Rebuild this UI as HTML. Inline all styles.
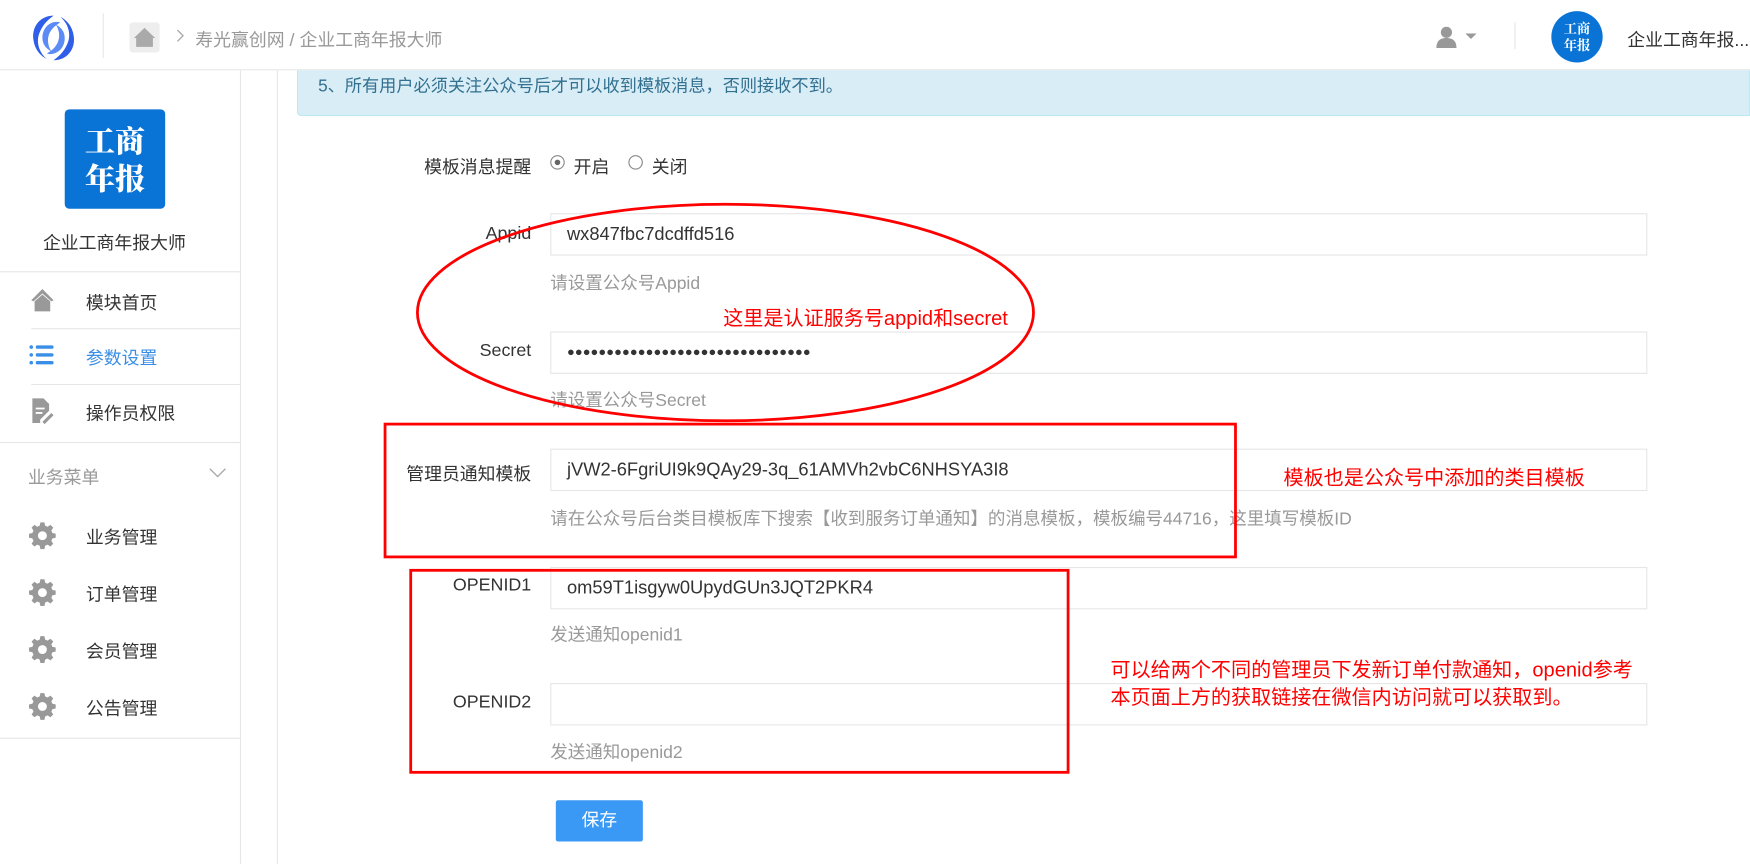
<!DOCTYPE html>
<html><head><meta charset="utf-8"><style>
*{margin:0;padding:0;box-sizing:border-box}
html,body{width:1750px;height:864px;overflow:hidden;background:#fff}
#w{position:absolute;left:0;top:0;width:1568px;height:774px;transform:scale(1.11607);transform-origin:0 0;font-family:"Liberation Sans","Noto Sans CJK SC",sans-serif;font-size:16px;color:#333}
.a{position:absolute;white-space:nowrap}
.hl{position:absolute;background:#e6e6e6;height:1px}
.lab{position:absolute;right:1092px;text-align:right;white-space:nowrap;font-size:16px;color:#333}
.inp{position:absolute;left:493px;width:983px;height:38px;border:1px solid #e6e6e6;padding-left:14px;line-height:36px;font-size:16.4px;color:#333}
.help{position:absolute;left:493px;color:#999;font-size:15.7px;white-space:nowrap}
.red{color:#f00;position:absolute;white-space:nowrap;font-size:18px}
.mi{position:absolute;left:77px;font-size:16px;color:#333}
</style></head><body><div id="w">
<div class="a" style="left:0;top:0;width:1568px;height:63px;border-bottom:1px solid #e8e8e8;background:#fff"></div>
<svg class="a" style="left:24px;top:10px" width="48" height="48" viewBox="0 0 48 48">
<path d="M24 4 C12 4 4 14 6 26 C7 34 12 40 18 43 C10 36 8 26 12 18 C15 11 20 7 24 4Z" fill="#2f5ee8"/>
<path d="M24 44 C36 44 44 34 42 22 C41 14 36 8 30 5 C38 12 40 22 36 30 C33 37 28 41 24 44Z" fill="#2f5ee8"/>
<path d="M30 10 C22 8 14 14 14 24 C14 30 18 34 22 36 C18 30 18 22 22 17 C24 14 27 12 30 10Z" fill="#5b8cf5"/>
<path d="M18 38 C26 40 34 34 34 24 C34 18 30 14 26 12 C30 18 30 26 26 31 C24 34 21 36 18 38Z" fill="#5b8cf5"/>
</svg>
<div class="a" style="left:92px;top:12px;width:1px;height:40px;background:#e6e6e6"></div>
<div class="a" style="left:116px;top:20px;width:27px;height:27px;background:#eee;border-radius:3px"></div>
<svg class="a" style="left:119px;top:23px" width="21" height="21" viewBox="0 0 21 21"><path d="M10.5 2 L1 11 L3 11 L3 19 L18 19 L18 11 L20 11Z" fill="#aaa"/></svg>
<svg class="a" style="left:158px;top:26px" width="8" height="12" viewBox="0 0 8 12"><path d="M1 1 L6 6 L1 11" stroke="#aaa" stroke-width="1.2" fill="none"/></svg>
<div class="a" style="left:175px;top:22px;color:#999;font-size:16px">寿光赢创网 / 企业工商年报大师</div>
<svg class="a" style="left:1285px;top:22px" width="22" height="22" viewBox="0 0 22 22"><circle cx="11" cy="7" r="5" fill="#999"/><path d="M2 21 C2 14 6 12 11 12 C16 12 20 14 20 21Z" fill="#999"/></svg>
<div class="a" style="left:1313px;top:30px;width:0;height:0;border-left:5px solid transparent;border-right:5px solid transparent;border-top:5px solid #999"></div>
<div class="a" style="left:1357px;top:20px;width:1px;height:24px;background:#e6e6e6"></div>
<div class="a" style="left:1390px;top:10px;width:46px;height:46px;border-radius:50%;background:#0A74D6;color:#fff;font-family:'Noto Serif CJK SC',serif;font-weight:bold;font-size:12px;line-height:15px;text-align:center;padding-top:8px">工商<br>年报</div>
<div class="a" style="left:1458px;top:22px;font-size:16px;color:#333">企业工商年报...</div>
<div class="a" style="left:215px;top:63px;width:1px;height:711px;background:#e6e6e6"></div>
<div class="a" style="left:248px;top:63px;width:1px;height:711px;background:#e6e6e6"></div>
<div class="a" style="left:58px;top:98px;width:90px;height:89px;background:#0A74D6;border-radius:4px;color:#fff;font-family:'Noto Serif CJK SC',serif;font-weight:900;font-size:27px;line-height:34px;text-align:center;padding-top:10px">工商<br>年报</div>
<div class="a" style="left:0;width:205px;top:204px;text-align:center;font-size:16px">企业工商年报大师</div>
<div class="hl" style="left:0;width:215px;top:243px"></div>
<svg class="a" style="left:26px;top:256px" width="24" height="24" viewBox="0 0 24 24"><path d="M12 3 L2 13 L4 14 L12 7 L20 14 L22 13Z" fill="#999"/><path d="M5 14 L12 8 L19 14 L19 23 L5 23Z" fill="#999"/></svg>
<div class="mi" style="top:258px">模块首页</div>
<div class="hl" style="left:28px;width:187px;top:294px"></div>
<svg class="a" style="left:26px;top:308px" width="24" height="20" viewBox="0 0 24 20"><g fill="#3a8ee6"><circle cx="2" cy="3" r="1.6"/><circle cx="2" cy="10" r="1.6"/><circle cx="2" cy="17" r="1.6"/><rect x="6" y="1.5" width="16" height="3" rx="1.5"/><rect x="6" y="8.5" width="16" height="3" rx="1.5"/><rect x="6" y="15.5" width="16" height="3" rx="1.5"/></g></svg>
<div class="mi" style="top:307px;color:#3a8ee6">参数设置</div>
<div class="hl" style="left:28px;width:187px;top:344px"></div>
<svg class="a" style="left:27px;top:356px" width="22" height="24" viewBox="0 0 22 24"><path d="M2 1 L12 1 L17 6 L17 12 L9 20 L9 23 L2 23Z" fill="#999"/><path d="M5 10 L13 10 M5 14 L11 14" stroke="#fff" stroke-width="1.6"/><path d="M11 22 L19 14 L21 16 L13 24Z" fill="#999"/></svg>
<div class="mi" style="top:357px">操作员权限</div>
<div class="hl" style="left:0;width:215px;top:396px"></div>
<div class="a" style="left:25px;top:414px;color:#999">业务菜单</div>
<svg class="a" style="left:187px;top:419px" width="16" height="10" viewBox="0 0 16 10"><path d="M1 1 L8 8 L15 1" stroke="#aaa" stroke-width="1.2" fill="none"/></svg>
<svg width="0" height="0" style="position:absolute"><defs><g id="gear"><path fill="#999" d="M10.2 1h3.6l.6 3 2.2 1 2.6-1.7 2.5 2.5-1.7 2.6 1 2.2 3 .6v3.6l-3 .6-1 2.2 1.7 2.6-2.5 2.5-2.6-1.7-2.2 1-.6 3h-3.6l-.6-3-2.2-1-2.6 1.7-2.5-2.5 1.7-2.6-1-2.2-3-.6v-3.6l3-.6 1-2.2-1.7-2.6 2.5-2.5 2.6 1.7 2.2-1z"/><circle cx="12" cy="13" r="4" fill="#fff"/></g></defs></svg>
<svg class="a" style="left:26px;top:467px" width="24" height="26" viewBox="0 0 24 26"><use href="#gear"/></svg>
<div class="mi" style="top:468px">业务管理</div>
<svg class="a" style="left:26px;top:518px" width="24" height="26" viewBox="0 0 24 26"><use href="#gear"/></svg>
<div class="mi" style="top:519px">订单管理</div>
<svg class="a" style="left:26px;top:569px" width="24" height="26" viewBox="0 0 24 26"><use href="#gear"/></svg>
<div class="mi" style="top:570px">会员管理</div>
<svg class="a" style="left:26px;top:620px" width="24" height="26" viewBox="0 0 24 26"><use href="#gear"/></svg>
<div class="mi" style="top:621px">公告管理</div>
<div class="hl" style="left:0;width:215px;top:661px"></div>
<div class="a" style="left:266px;top:63px;width:1302px;height:41px;background:#d9edf7;border:1px solid #bce8f1;border-top:none;border-radius:0 0 0 4px"></div>
<div class="a" style="left:285px;top:65px;color:#31708f;font-size:15.4px">5、所有用户必须关注公众号后才可以收到模板消息，否则接收不到。</div>
<div class="lab" style="top:136px">模板消息提醒</div>
<div class="a" style="left:493px;top:139px;width:13px;height:13px;border:1px solid #888;border-radius:50%"></div>
<div class="a" style="left:497px;top:143px;width:5px;height:5px;background:#666;border-radius:50%"></div>
<div class="a" style="left:514px;top:136px">开启</div>
<div class="a" style="left:563px;top:139px;width:13px;height:13px;border:1px solid #888;border-radius:50%"></div>
<div class="a" style="left:584px;top:136px">关闭</div>
<div class="lab" style="top:201px">Appid</div>
<div class="inp" style="top:191px">wx847fbc7dcdffd516</div>
<div class="help" style="top:241px">请设置公众号Appid</div>
<div class="lab" style="top:306px">Secret</div>
<div class="inp" style="top:297px;font-size:11.5px;letter-spacing:0.1px">●●●●●●●●●●●●●●●●●●●●●●●●●●●●●●●</div>
<div class="help" style="top:346px">请设置公众号Secret</div>
<div class="lab" style="top:411px">管理员通知模板</div>
<div class="inp" style="top:402px">jVW2-6FgriUI9k9QAy29-3q_61AMVh2vbC6NHSYA3I8</div>
<div class="help" style="top:452px">请在公众号后台类目模板库下搜索【收到服务订单通知】的消息模板，模板编号44716，这里填写模板ID</div>
<div class="lab" style="top:516px">OPENID1</div>
<div class="inp" style="top:508px">om59T1isgyw0UpydGUn3JQT2PKR4</div>
<div class="help" style="top:556px">发送通知openid1</div>
<div class="lab" style="top:621px">OPENID2</div>
<div class="inp" style="top:612px"></div>
<div class="help" style="top:661px">发送通知openid2</div>
<div class="a" style="left:498px;top:717px;width:78px;height:37px;background:#3a99f5;border-radius:2px;color:#fff;text-align:center;line-height:37px;font-size:16px">保存</div>
<svg class="a" style="left:0;top:0" width="1568" height="774">
<ellipse cx="650" cy="280" rx="276" ry="97" fill="none" stroke="#f00" stroke-width="2.5"/>
<rect x="345" y="380" width="762" height="119" fill="none" stroke="#f00" stroke-width="2.5"/>
<rect x="368" y="511" width="589" height="181" fill="none" stroke="#f00" stroke-width="2.5"/>
</svg>
<div class="red" style="left:648px;top:271px">这里是认证服务号appid和secret</div>
<div class="red" style="left:1150px;top:414px">模板也是公众号中添加的类目模板</div>
<div class="red" style="left:995px;top:588px;line-height:25px">可以给两个不同的管理员下发新订单付款通知，openid参考<br>本页面上方的获取链接在微信内访问就可以获取到。</div>
</div></body></html>
